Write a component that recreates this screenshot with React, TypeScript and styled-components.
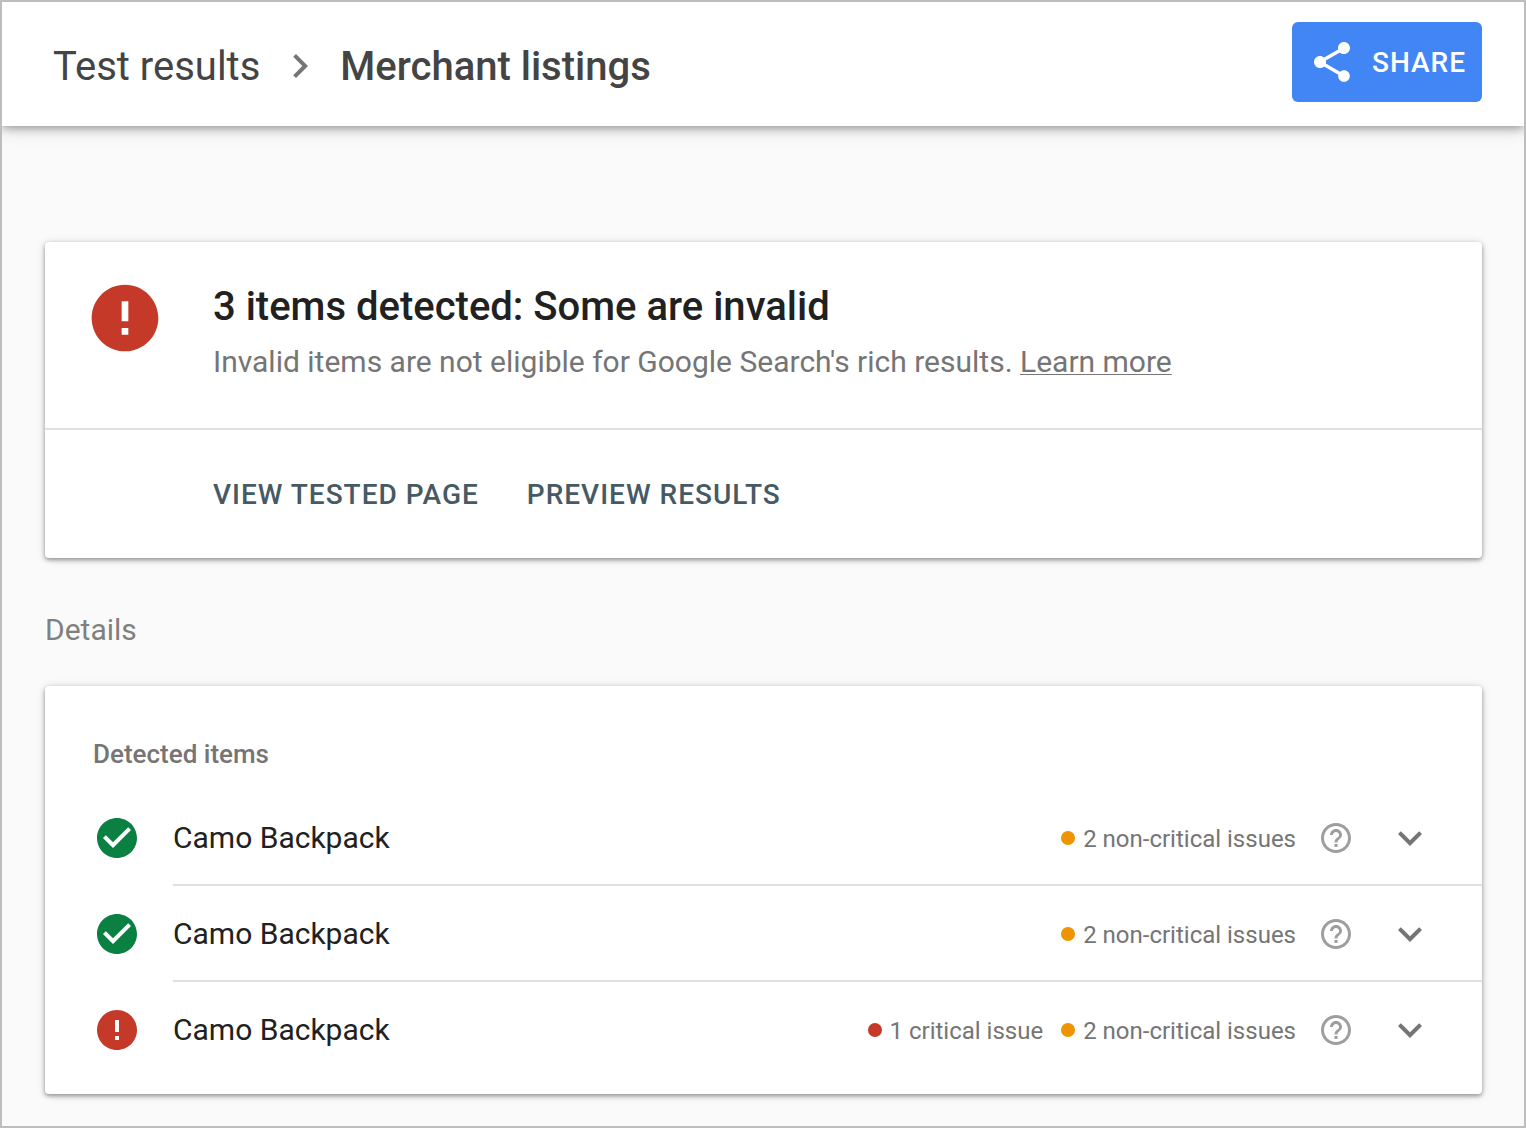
import React from "react";
import styled, { createGlobalStyle } from "styled-components";

const GlobalStyle = createGlobalStyle`
  *, *::before, *::after { box-sizing: border-box; }
  body {
    margin: 0;
    background: #fafafa;
    color: #212121;
    font-family: Roboto, "Liberation Sans", sans-serif;
  }
`;

const Page = styled.div`
  display: flex;
  flex-direction: column;
  min-height: 100vh;
  border: 2px solid #bdbdbd;
  overflow: clip;
`;

const Header = styled.header`
  display: flex;
  align-items: flex-start;
  justify-content: space-between;
  gap: 24px;
  padding: 20px 42px 24px 51px;
  background: #fff;
  box-shadow: 0 2px 8px rgba(0, 0, 0, 0.3), 0 4px 16px rgba(0, 0, 0, 0.16);
`;

const Breadcrumb = styled.nav`
  display: flex;
  align-items: center;
  gap: 16px;
  padding-top: 19px;
  font-size: 40px;
  line-height: 48px;
  color: #444;
`;

const CrumbLink = styled.a`
  padding-top: 2px;
  color: inherit;
  text-decoration: none;
`;

const CurrentCrumb = styled.span`
  padding-top: 2px;
  font-weight: 500;
`;

const Icon = styled.svg<{ $size: number; $color: string }>`
  display: block;
  flex: none;
  width: ${(p) => p.$size}px;
  height: ${(p) => p.$size}px;
  fill: ${(p) => p.$color};
`;

const Label = styled.span`
  padding-top: 2px;
`;

const ShareButton = styled.button`
  display: flex;
  align-items: center;
  gap: 16px;
  height: 80px;
  padding: 0 16px;
  border: 0;
  border-radius: 6px;
  background: #4285f4;
  color: #fff;
  font: 500 28px/40px Roboto, "Liberation Sans", sans-serif;
  letter-spacing: 1px;
  text-transform: uppercase;
  cursor: pointer;
`;

const Main = styled.main`
  padding: 116px 42px 32px 43px;
`;

const Card = styled.section`
  border-radius: 4px;
  background: #fff;
  box-shadow: 0 2px 4px rgba(0, 0, 0, 0.36), 0 1px 10px rgba(0, 0, 0, 0.14);
`;

const Summary = styled.div`
  display: flex;
  align-items: flex-start;
  gap: 48px;
  padding: 36px 40px 45px;
  border-bottom: 2px solid #e0e0e0;
`;

const SummaryTitle = styled.h1`
  margin: 0;
  padding-top: 4px;
  font-size: 40px;
  font-weight: 500;
  line-height: 50px;
`;

const SummaryText = styled.p`
  margin: 0;
  padding-top: 9px;
  font-size: 30px;
  line-height: 42px;
  color: #757575;
`;

const TextLink = styled.a`
  color: inherit;
  text-decoration: underline;
  text-decoration-thickness: 1px;
  text-underline-offset: 2px;
`;

const Actions = styled.div`
  display: flex;
  gap: 48px;
  padding: 44px 168px 42px;
`;

const ActionButton = styled.button`
  padding: 0;
  border: 0;
  background: none;
  color: #455a64;
  font: 500 28px/42px Roboto, "Liberation Sans", sans-serif;
  letter-spacing: 1px;
  text-transform: uppercase;
  cursor: pointer;
`;

const SectionTitle = styled.h2`
  margin: 0;
  padding: 52px 0 36px;
  font-size: 30px;
  font-weight: 400;
  line-height: 40px;
  color: #808080;
`;

const ItemsCard = styled(Card)`
  padding: 48px 0 16px 48px;
`;

const ItemsTitle = styled.h3`
  margin: 0 0 16px;
  font-size: 26px;
  font-weight: 500;
  line-height: 40px;
  color: #757575;
`;

const ItemList = styled.ul`
  margin: 0;
  padding: 0;
  list-style: none;
`;

const ItemBody = styled.div`
  display: flex;
  flex: 1;
  align-items: center;
  height: 96px;
  padding-right: 48px;
`;

const ItemRow = styled.li`
  display: flex;
  align-items: center;
  gap: 32px;

  &:not(:last-child) > ${ItemBody} {
    box-shadow: inset 0 -2px #e0e0e0;
  }
`;

const ItemName = styled.span`
  flex: 1;
  font-size: 30px;
  line-height: 40px;
`;

const Issues = styled.div`
  display: flex;
  gap: 18px;
`;

const Issue = styled.span<{ $color: string }>`
  display: flex;
  align-items: center;
  gap: 8px;
  font-size: 24px;
  line-height: 40px;
  color: #757575;

  &::before {
    content: "";
    width: 14px;
    height: 14px;
    border-radius: 50%;
    background: ${(p) => p.$color};
  }
`;

const IconButton = styled.button<{ $gap: number }>`
  margin: 0 0 0 ${(p) => p.$gap}px;
  padding: 0;
  border: 0;
  background: none;
  cursor: pointer;
`;

const RED = "#c53929";
const GREEN = "#0b8043";
const ORANGE = "#f09300";

const paths = {
  chevronRight: "M10 6 8.59 7.41 13.17 12l-4.58 4.59L10 18l6-6z",
  expand: "M16.59 8.59 12 13.17 7.41 8.59 6 10l6 6 6-6z",
  share:
    "M18 16.08c-.76 0-1.44.3-1.96.77L8.91 12.7c.05-.23.09-.46.09-.7s-.04-.47-.09-.7l7.05-4.11c.54.5 1.25.81 2.04.81 1.66 0 3-1.34 3-3s-1.34-3-3-3-3 1.34-3 3c0 .24.04.47.09.7L8.04 9.81C7.5 9.31 6.79 9 6 9c-1.66 0-3 1.34-3 3s1.34 3 3 3c.79 0 1.5-.31 2.04-.81l7.12 4.16c-.05.21-.08.43-.08.65 0 1.61 1.31 2.92 2.92 2.92s2.92-1.31 2.92-2.92-1.31-2.92-2.92-2.92z",
  error:
    "M12 2C6.48 2 2 6.48 2 12s4.48 10 10 10 10-4.48 10-10S17.52 2 12 2zm1 15h-2v-2h2v2zm0-4h-2V7h2v6z",
  check:
    "M12 2C6.48 2 2 6.48 2 12s4.48 10 10 10 10-4.48 10-10S17.52 2 12 2zm-2 15-5-5 1.41-1.41L10 14.17l7.59-7.59L19 8l-9 9z",
  help: "M11 18h2v-2h-2v2zm1-16C6.48 2 2 6.48 2 12s4.48 10 10 10 10-4.48 10-10S17.52 2 12 2zm0 18c-4.41 0-8-3.59-8-8s3.59-8 8-8 8 3.59 8 8-3.59 8-8 8zm0-14c-2.21 0-4 1.79-4 4h2c0-1.1.9-2 2-2s2 .9 2 2c0 2-3 1.75-3 5h2c0-2.25 3-2.5 3-5 0-2.21-1.79-4-4-4z",
};

function Glyph({ name, size, color }: { name: keyof typeof paths; size: number; color: string }) {
  return (
    <Icon viewBox="0 0 24 24" aria-hidden="true" $size={size} $color={color}>
      <path d={paths[name]} />
    </Icon>
  );
}

const items = [
  { id: 1, name: "Camo Backpack", critical: "", nonCritical: "2 non-critical issues" },
  { id: 2, name: "Camo Backpack", critical: "", nonCritical: "2 non-critical issues" },
  { id: 3, name: "Camo Backpack", critical: "1 critical issue", nonCritical: "2 non-critical issues" },
];

export default function App() {
  return (
    <>
      <GlobalStyle />
      <Page>
        <Header>
          <Breadcrumb aria-label="Breadcrumb">
            <CrumbLink href="#results">Test results</CrumbLink>
            <Glyph name="chevronRight" size={48} color="#757575" />
            <CurrentCrumb aria-current="page">Merchant listings</CurrentCrumb>
          </Breadcrumb>
          <ShareButton type="button">
            <Glyph name="share" size={48} color="#fff" />
            <Label>Share</Label>
          </ShareButton>
        </Header>
        <Main>
          <Card>
            <Summary>
              <Glyph name="error" size={80} color={RED} />
              <div>
                <SummaryTitle>3 items detected: Some are invalid</SummaryTitle>
                <SummaryText>
                  Invalid items are not eligible for Google Search's rich results.{" "}
                  <TextLink href="#learn-more">Learn more</TextLink>
                </SummaryText>
              </div>
            </Summary>
            <Actions>
              <ActionButton type="button">View tested page</ActionButton>
              <ActionButton type="button">Preview results</ActionButton>
            </Actions>
          </Card>
          <SectionTitle>Details</SectionTitle>
          <ItemsCard>
            <ItemsTitle>Detected items</ItemsTitle>
            <ItemList>
              {items.map((item) => (
                <ItemRow key={item.id}>
                  <Glyph
                    name={item.critical ? "error" : "check"}
                    size={48}
                    color={item.critical ? RED : GREEN}
                  />
                  <ItemBody>
                    <ItemName>{item.name}</ItemName>
                    <Issues>
                      {item.critical && (
                        <Issue $color={RED}>
                          <Label>{item.critical}</Label>
                        </Issue>
                      )}
                      <Issue $color={ORANGE}>
                        <Label>{item.nonCritical}</Label>
                      </Issue>
                    </Issues>
                    <IconButton type="button" aria-label="Help" $gap={22}>
                      <Glyph name="help" size={36} color="#9e9e9e" />
                    </IconButton>
                    <IconButton type="button" aria-label="Expand item" $gap={32}>
                      <Glyph name="expand" size={48} color="#757575" />
                    </IconButton>
                  </ItemBody>
                </ItemRow>
              ))}
            </ItemList>
          </ItemsCard>
        </Main>
      </Page>
    </>
  );
}
